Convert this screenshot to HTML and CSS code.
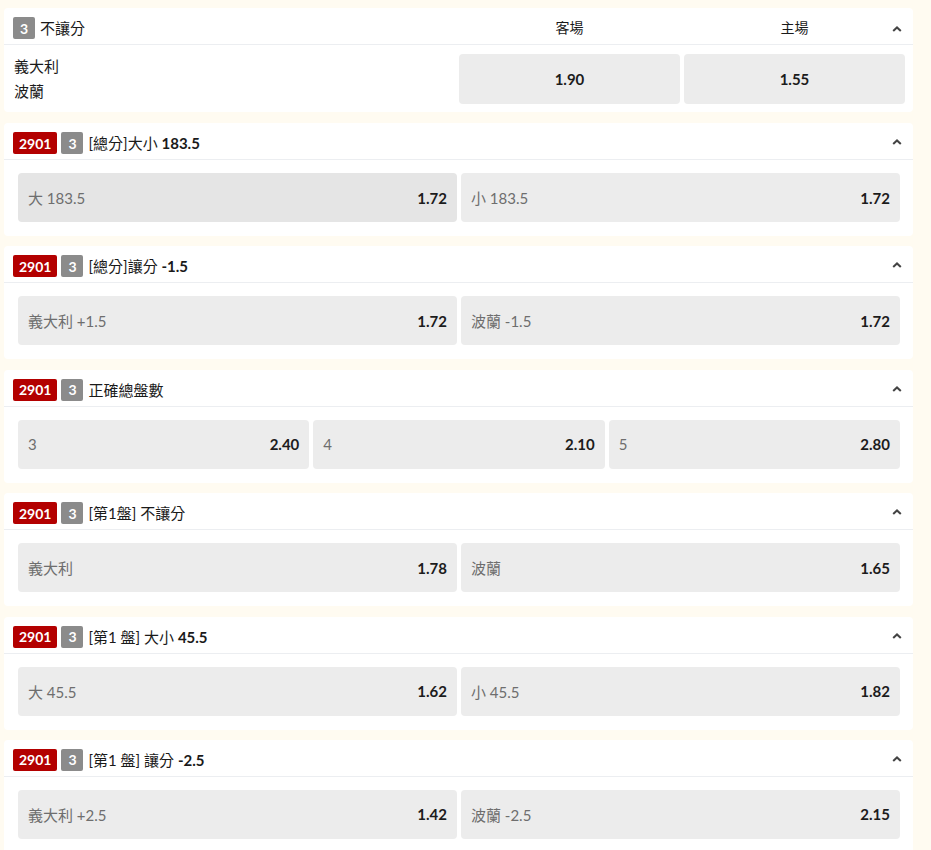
FILE: index.html
```html
<!DOCTYPE html>
<html lang="zh-Hant">
<head>
<meta charset="utf-8">
<link rel="stylesheet" href="styles.css">
</head>
<body>
<div class="page">

  <section class="card card-main">
    <div class="card-head head-main">
      <div class="title"><span class="badge grey">3</span><span class="title-text">不讓分</span></div>
      <div class="col-label">客場</div>
      <div class="col-label">主場</div>
      <svg class="chev" viewBox="0 0 10 6" width="10" height="6"><polyline points="1.2,5 5,1.4 8.8,5" fill="none" stroke="#444" stroke-width="2"/></svg>
    </div>
    <div class="body-main">
      <div class="teams"><div>義大利</div><div>波蘭</div></div>
      <div class="odd-btn center"><span class="odd">1.90</span></div>
      <div class="odd-btn center"><span class="odd">1.55</span></div>
    </div>
  </section>

  <section class="card">
    <div class="card-head">
      <div class="title"><span class="badge red">2901</span><span class="badge grey">3</span><span class="title-text">[總分]大小 <span class="num">183.5</span></span></div>
      <svg class="chev" viewBox="0 0 10 6" width="10" height="6"><polyline points="1.2,5 5,1.4 8.8,5" fill="none" stroke="#444" stroke-width="2"/></svg>
    </div>
    <div class="card-body cols-2">
      <div class="odd-btn hover"><span class="lbl">大 183.5</span><span class="odd">1.72</span></div>
      <div class="odd-btn"><span class="lbl">小 183.5</span><span class="odd">1.72</span></div>
    </div>
  </section>

  <section class="card">
    <div class="card-head">
      <div class="title"><span class="badge red">2901</span><span class="badge grey">3</span><span class="title-text">[總分]讓分 <span class="num">-1.5</span></span></div>
      <svg class="chev" viewBox="0 0 10 6" width="10" height="6"><polyline points="1.2,5 5,1.4 8.8,5" fill="none" stroke="#444" stroke-width="2"/></svg>
    </div>
    <div class="card-body cols-2">
      <div class="odd-btn"><span class="lbl">義大利 +1.5</span><span class="odd">1.72</span></div>
      <div class="odd-btn"><span class="lbl">波蘭 -1.5</span><span class="odd">1.72</span></div>
    </div>
  </section>

  <section class="card">
    <div class="card-head">
      <div class="title"><span class="badge red">2901</span><span class="badge grey">3</span><span class="title-text">正確總盤數</span></div>
      <svg class="chev" viewBox="0 0 10 6" width="10" height="6"><polyline points="1.2,5 5,1.4 8.8,5" fill="none" stroke="#444" stroke-width="2"/></svg>
    </div>
    <div class="card-body cols-3">
      <div class="odd-btn"><span class="lbl">3</span><span class="odd">2.40</span></div>
      <div class="odd-btn"><span class="lbl">4</span><span class="odd">2.10</span></div>
      <div class="odd-btn"><span class="lbl">5</span><span class="odd">2.80</span></div>
    </div>
  </section>

  <section class="card">
    <div class="card-head">
      <div class="title"><span class="badge red">2901</span><span class="badge grey">3</span><span class="title-text">[第1盤] 不讓分</span></div>
      <svg class="chev" viewBox="0 0 10 6" width="10" height="6"><polyline points="1.2,5 5,1.4 8.8,5" fill="none" stroke="#444" stroke-width="2"/></svg>
    </div>
    <div class="card-body cols-2">
      <div class="odd-btn"><span class="lbl">義大利</span><span class="odd">1.78</span></div>
      <div class="odd-btn"><span class="lbl">波蘭</span><span class="odd">1.65</span></div>
    </div>
  </section>

  <section class="card">
    <div class="card-head">
      <div class="title"><span class="badge red">2901</span><span class="badge grey">3</span><span class="title-text">[第1 盤] 大小 <span class="num">45.5</span></span></div>
      <svg class="chev" viewBox="0 0 10 6" width="10" height="6"><polyline points="1.2,5 5,1.4 8.8,5" fill="none" stroke="#444" stroke-width="2"/></svg>
    </div>
    <div class="card-body cols-2">
      <div class="odd-btn"><span class="lbl">大 45.5</span><span class="odd">1.62</span></div>
      <div class="odd-btn"><span class="lbl">小 45.5</span><span class="odd">1.82</span></div>
    </div>
  </section>

  <section class="card">
    <div class="card-head">
      <div class="title"><span class="badge red">2901</span><span class="badge grey">3</span><span class="title-text">[第1 盤] 讓分 <span class="num">-2.5</span></span></div>
      <svg class="chev" viewBox="0 0 10 6" width="10" height="6"><polyline points="1.2,5 5,1.4 8.8,5" fill="none" stroke="#444" stroke-width="2"/></svg>
    </div>
    <div class="card-body cols-2">
      <div class="odd-btn"><span class="lbl">義大利 +2.5</span><span class="odd">1.42</span></div>
      <div class="odd-btn"><span class="lbl">波蘭 -2.5</span><span class="odd">2.15</span></div>
    </div>
  </section>

</div>
</body>
</html>
```

FILE: styles.css
```css
* { box-sizing: border-box; }

html, body {
  margin: 0;
  padding: 0;
  background: #fffbf1;
}

body {
  font-family: Lato, "Noto Sans CJK TC", sans-serif;
  color: #1c1c1c;
  font-size: 15px;
}

.page {
  width: 913px;
  padding: 8px 0 0 4px;
}

.card {
  background: #ffffff;
  border-radius: 4px;
  margin-bottom: 10.4px;
}

.card-head {
  position: relative;
  height: 37px;
  padding: 9px 30px 5px 9px;
  border-bottom: 1px solid #eceef1;
  display: flex;
  align-items: center;
}

.title {
  display: flex;
  align-items: center;
  height: 22px;
}

.badge {
  display: inline-flex;
  align-items: center;
  justify-content: center;
  height: 22px;
  padding: 0 6px;
  min-width: 22px;
  border-radius: 2px;
  color: #fff;
  font-family: Lato, sans-serif;
  font-weight: 700;
  font-size: 14px;
  margin-right: 4px;
}

.badge.red { background: #b30000; }
.badge.grey { background: #8b8b8b; margin-right: 5px; }

.title-text {
  font-size: 15px;
  line-height: 22px;
  color: #1a1a1a;
  white-space: nowrap;
}

.num { font-weight: 700; }

.chev {
  position: absolute;
  right: 11px;
  top: 16px;
}

.card-body {
  display: grid;
  gap: 4px;
  padding: 13px 13px 14px 14px;
}

.cols-2 { grid-template-columns: 1fr 1fr; }
.cols-3 { grid-template-columns: 1fr 1fr 1fr; }

.odd-btn {
  height: 49px;
  background: #ececec;
  border-radius: 4px;
  display: flex;
  align-items: center;
  justify-content: space-between;
  padding: 0 10px 0 10px;
}

.odd-btn.hover { background: #e5e5e5; }

.odd-btn.center { justify-content: center; height: 50px; }

.lbl {
  color: #6e6e6e;
  font-size: 15px;
}

.odd {
  color: #1c1c1c;
  font-weight: 700;
  font-size: 15px;
}

/* first card */
.head-main {
  display: grid;
  grid-template-columns: 1fr 221px 221px;
  column-gap: 4px;
  padding: 9px 8px 5px 9px;
}

.col-label {
  text-align: center;
  font-size: 14px;
  color: #1a1a1a;
  line-height: 22px;
}

.head-main .chev { right: 11px; top: 18px; }

.card-main { margin-bottom: 11px; }

.body-main {
  display: grid;
  grid-template-columns: 1fr 221px 221px;
  column-gap: 4px;
  padding: 9px 8px 8px 10px;
}

.teams {
  font-size: 15px;
  line-height: 25px;
  color: #1a1a1a;
}
```
